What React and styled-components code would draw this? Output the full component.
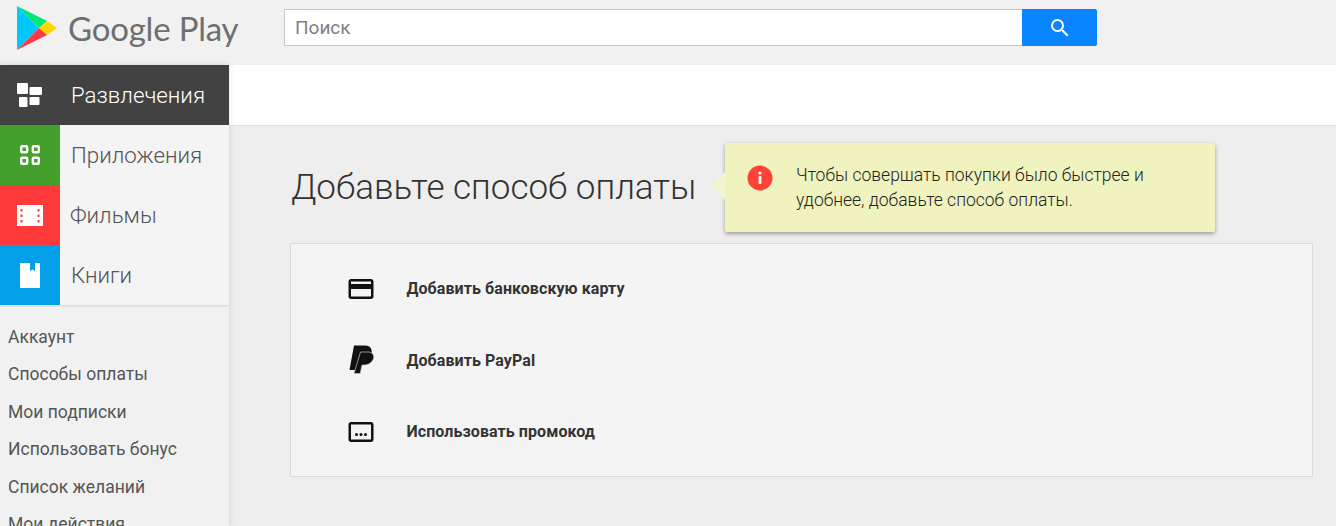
import React from "react";
import styled, { createGlobalStyle } from "styled-components";

const Global = createGlobalStyle`
  html, body { margin: 0; padding: 0; background: #eeeeee; }
  * { box-sizing: border-box; }
  body { font-family: Roboto, "Noto Sans", sans-serif; overflow: hidden; }
`;
const Page = styled.div`width: 1336px; height: 526px; overflow: hidden; display: flex; flex-direction: column;`;
const Header = styled.header`height: 65px; flex: none; background: #f1f1f1; display: flex; align-items: flex-start;`;
const Logo = styled.div`width: 284px; height: 65px; flex: none; display: flex; align-items: flex-start; padding: 5px 0 0 16px; gap: 8px;`;
const Wordmark = styled.span`font-family: Lato, sans-serif; font-size: 33px; line-height: 46px; letter-spacing: -0.2px; color: #6f6f6f; white-space: nowrap;`;
const Search = styled.div`margin-top: 9px; width: 813px; height: 37px; display: flex;`;
const SearchInput = styled.div`flex: 1; height: 37px; background: #fff; border: 1px solid #c6c6c6; border-right: 0; padding-left: 10px; font-size: 19px; line-height: 35px; color: #808080;`;
const SearchBtn = styled.div`width: 75px; height: 37px; background: #0a84ff; border-radius: 0 2px 2px 0; display: flex; align-items: center; justify-content: center;`;
const Body = styled.div`flex: 1; display: flex; min-height: 0;`;
const Side = styled.aside`width: 229px; flex: none; background: #f1f1f1; box-shadow: 0 0 6px rgba(0,0,0,.12); z-index: 1; overflow: hidden;`;
const NavRow = styled.div`height: 60px; display: flex; align-items: center; background: ${p => (p.$active ? "#424242" : "#f4f4f4")}; color: ${p => (p.$active ? "#fff" : "#555")}; font-size: 22.3px; font-weight: 300;`;
const NavIcon = styled.div`width: 60px; height: 60px; flex: none; display: flex; align-items: center; justify-content: center; background: ${p => p.$bg || "transparent"};`;
const NavLabel = styled.span`margin-left: ${p => p.$ml ?? 11}px;`;
const SubMenu = styled.nav`border-top: 2px solid #e2e2e2; padding: 11.5px 0 0 8px;`;
const SubItem = styled.div`height: 37.5px; font-size: 17.5px; line-height: 37.5px; color: #555; font-weight: 400; white-space: nowrap;`;
const Main = styled.main`flex: 1; min-width: 0; display: flex; flex-direction: column;`;
const TopBar = styled.div`height: 61px; flex: none; background: #fff; border-bottom: 1px solid #e2e2e2;`;
const Content = styled.div`padding: 17px 23px 0 61px;`;
const TitleRow = styled.div`display: flex; align-items: flex-start; height: 100px;`;
const Title = styled.h1`margin: 23px 0 0 1px; width: 434px; flex: none; font-size: 35px; line-height: 44px; font-weight: 300; color: #333; white-space: nowrap;`;
const Tip = styled.div`position: relative; width: 490px; height: 89px; background: #f0f3be; border-radius: 2px; box-shadow: 0 2px 4px rgba(0,0,0,.35); display: flex; padding: 20px 30px 0 22px;
  &::before { content: ""; position: absolute; left: -14px; top: 29px; width: 14px; height: 28px; background: #f3f5d0; clip-path: polygon(100% 0, 0 50%, 100% 100%); }`;
const TipIcon = styled.div`width: 26px; height: 26px; flex: none; margin-top: 2px;`;
const TipText = styled.div`margin-left: 23px; font-size: 17.5px; line-height: 25px; font-weight: 300; color: #222; width: 385px;`;
const Card = styled.section`height: 234px; background: #f4f4f4; border: 1px solid #d9d9d9; padding: 9px 0 0 57px;`;
const Option = styled.div`height: 71.5px; display: flex; align-items: center; font-size: 16px; letter-spacing: 0.08px; font-weight: 700; color: #333;`;
const OptIcon = styled.div`width: 26px; height: 24px; flex: none; display: flex; align-items: center; justify-content: center; margin-right: 32.5px;`;

const Svg = styled.svg`display: block; flex: none;`;
const PlayMark = () => (
  <Svg width="44" height="46" viewBox="0 0 44 46">
    <polygon points="1,1 1,45 23,23" fill="#00c8ff" />
    <polygon points="1,1 23,23 31,16" fill="#00e676" />
    <polygon points="31,16 41,23 31,30 23,23" fill="#ffd600" />
    <polygon points="1,45 23,23 31,30" fill="#ff3a44" />
  </Svg>
);
const W = "#fff";
const App = () => (
  <Page>
    <Global />
    <Header>
      <Logo><PlayMark /><Wordmark>Google Play</Wordmark></Logo>
      <Search>
        <SearchInput>Поиск</SearchInput>
        <SearchBtn>
          <Svg width="24" height="24" viewBox="0 0 24 24"><path fill={W} d="M15.5 14h-.79l-.28-.27A6.47 6.47 0 0 0 16 9.5 6.5 6.5 0 1 0 9.5 16c1.61 0 3.09-.59 4.23-1.57l.27.28v.79l5 4.99L20.49 19l-4.99-5zm-6 0C7.01 14 5 11.99 5 9.5S7.01 5 9.5 5 14 7.01 14 9.5 11.99 14 9.5 14z" /></Svg>
        </SearchBtn>
      </Search>
    </Header>
    <Body>
      <Side>
        <NavRow $active>
          <NavIcon>
            <Svg width="26" height="24" viewBox="0 0 26 24"><rect x="0" y="0" width="11" height="11" rx="1" fill={W} /><rect x="12.5" y="4" width="12.5" height="8" rx="1" fill={W} /><rect x="2" y="14" width="8.5" height="10" rx="1" fill={W} /><rect x="12.5" y="14" width="10" height="8" rx="1" fill={W} /></Svg>
          </NavIcon>
          <NavLabel>Развлечения</NavLabel>
        </NavRow>
        <NavRow>
          <NavIcon $bg="#43a02c">
            <Svg width="20" height="20" viewBox="0 0 20 20" fill="none" stroke={W} strokeWidth="2.4"><rect x="1.2" y="1.2" width="6" height="6" rx="1" /><rect x="12.8" y="1.2" width="6" height="6" rx="1" /><rect x="1.2" y="12.8" width="6" height="6" rx="1" /><rect x="12.8" y="12.8" width="6" height="6" rx="1" /></Svg>
          </NavIcon>
          <NavLabel>Приложения</NavLabel>
        </NavRow>
        <NavRow>
          <NavIcon $bg="#ff3a3a">
            <Svg width="26" height="21" viewBox="0 0 26 21"><path fill={W} fillRule="evenodd" d="M0 0h26v21H0zM3.5 4v2.5h2V4zm0 5.5V12h2V9.5zm0 5.5v2.5h2V15zM20.5 4v2.5h2V4zm0 5.5V12h2V9.5zm0 5.5v2.5h2V15z" /></Svg>
          </NavIcon>
          <NavLabel $ml={10}>Фильмы</NavLabel>
        </NavRow>
        <NavRow>
          <NavIcon $bg="#03a0e9">
            <Svg width="20" height="25" viewBox="0 0 20 25"><path fill={W} d="M0 0h10v8l2.5-1.5L15 8V0h5v25H1c-.6 0-1-.4-1-1z" /></Svg>
          </NavIcon>
          <NavLabel>Книги</NavLabel>
        </NavRow>
        <SubMenu>
          {["Аккаунт", "Способы оплаты", "Мои подписки", "Использовать бонус", "Список желаний", "Мои действия"].map(t => <SubItem key={t}>{t}</SubItem>)}
        </SubMenu>
      </Side>
      <Main>
        <TopBar />
        <Content>
          <TitleRow>
            <Title>Добавьте способ оплаты</Title>
            <Tip>
              <TipIcon>
                <Svg width="26" height="26" viewBox="0 0 26 26"><circle cx="13" cy="13" r="12.5" fill="#ff4336" /><circle cx="13" cy="8" r="1.6" fill={W} /><rect x="11.6" y="11" width="2.8" height="8" rx="1" fill={W} /></Svg>
              </TipIcon>
              <TipText>Чтобы совершать покупки было быстрее и удобнее, добавьте способ оплаты.</TipText>
            </Tip>
          </TitleRow>
          <Card>
            <Option>
              <OptIcon><Svg width="30" height="30" viewBox="0 0 24 24"><path fill="#111" d="M20 4H4c-1.11 0-1.99.89-1.99 2L2 18c0 1.11.89 2 2 2h16c1.11 0 2-.89 2-2V6c0-1.11-.89-2-2-2zm0 14H4v-6h16v6zm0-10H4V6h16v2z" /></Svg></OptIcon>
              Добавить банковскую карту
            </Option>
            <Option>
              <OptIcon>
                <Svg width="40" height="40" viewBox="1 0 40 40">
                  <path fill="#111" d="M14 5.5h11c5 0 7.500 3.500 6.500 8-1 4.500-5 7-9.500 7h-3.500l-2 9.500H9.500z" />
                  <path fill="#111" stroke="#c8c8c8" strokeWidth="0.7" d="M20.500 12h8.500c3.500.5 5.500 3.500 4.500 6.500-1.200 3.800-5 6.500-9.500 6.500h-2l-1.800 8.500h-6.200z" />
                </Svg>
              </OptIcon>
              Добавить PayPal
            </Option>
            <Option>
              <OptIcon><Svg width="30" height="30" viewBox="0 0 24 24"><path fill="#111" fillRule="evenodd" d="M4 4h16c1.1 0 2 .9 2 2v12c0 1.1-.9 2-2 2H4c-1.1 0-2-.9-2-2V6c0-1.1.9-2 2-2zm0 2v12h16V6z" /><circle cx="8.4" cy="14" r="1.2" fill="#111" /><circle cx="12" cy="14" r="1.2" fill="#111" /><circle cx="15.6" cy="14" r="1.2" fill="#111" /></Svg></OptIcon>
              Использовать промокод
            </Option>
          </Card>
        </Content>
      </Main>
    </Body>
  </Page>
);
export default App;
